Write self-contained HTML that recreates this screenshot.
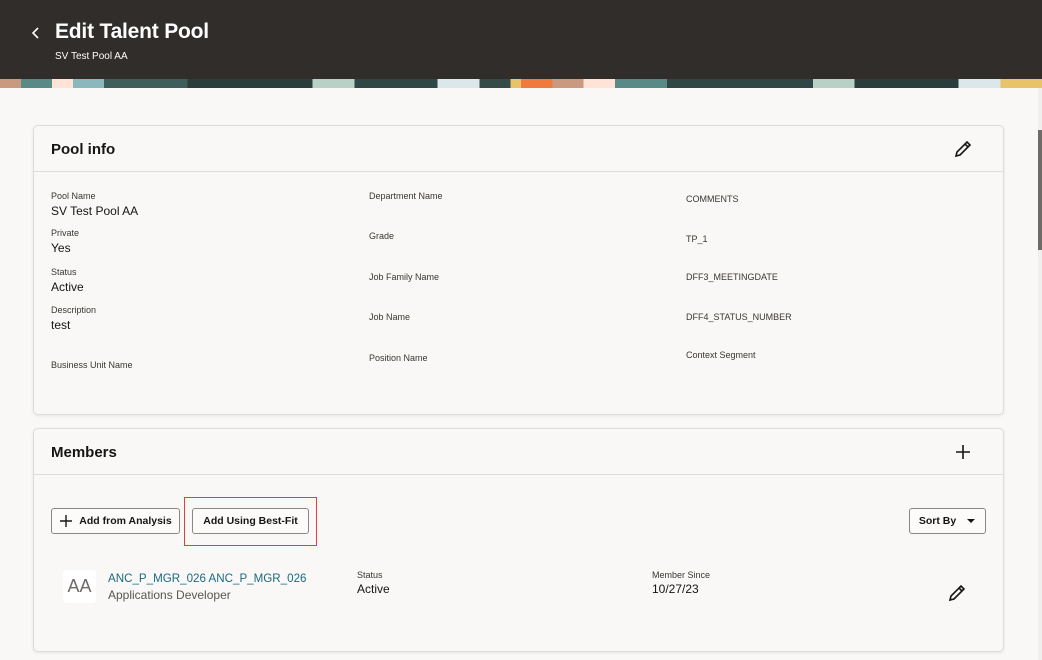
<!DOCTYPE html>
<html><head><style>
*{box-sizing:border-box;margin:0;padding:0}
body{width:1042px;height:660px;overflow:hidden;background:#f9f8f6;font-family:"Liberation Sans",sans-serif;color:#161513;position:relative}
.hdr{position:absolute;left:0;top:0;width:1042px;height:79px;background:#312d2a}
.hdr h1{position:absolute;left:55px;top:20px;color:#fff;font-size:21px;font-weight:bold;letter-spacing:-0.2px}
.hdr .sub{position:absolute;left:55px;top:51px;color:#fff;font-size:10px}
.band{position:absolute;left:0;top:79px;width:1042px;height:9px;background:linear-gradient(90deg,#c99a80 0 2%,#5a8a86 2% 5%,#ffe3d6 5% 7%,#8ab8bc 7% 10%,#3d5e5a 10% 18%,#2a3d3b 18% 30%,#b9d0c6 30% 34%,#2f4644 34% 42%,#dbe7ea 42% 46%,#354b48 46% 49%,#e8c36a 49% 50%,#f07a3e 50% 53%,#c99a80 53% 56%,#ffe3d6 56% 59%,#5a8a86 59% 64%,#2f4644 64% 78%,#b9d0c6 78% 82%,#2a3d3b 82% 92%,#dbe7ea 92% 96%,#e8c36a 96% 100%)}
.sb{position:absolute;left:1038px;top:88px;width:4px;height:572px;background:#f0efed}
.sb i{position:absolute;left:0;top:42px;width:4px;height:120px;background:#6f6b67}
.card{position:absolute;left:33px;width:971px;background:#f9f8f6;border:1px solid #dedcd9;border-radius:5px;box-shadow:0 1px 3px rgba(0,0,0,.08)}
.card h2{position:absolute;left:17px;font-size:15px;font-weight:bold}
.div{position:absolute;left:0;right:0;height:1px;background:#dedcd9}
.lbl{position:absolute;font-size:9px;color:#3a3632}
.val{position:absolute;font-size:12px;color:#161513}
.btn{position:absolute;height:26px;border:1px solid #8b8782;border-radius:3px;background:#fcfbfa;font-size:10.5px;font-weight:bold;display:flex;align-items:center;justify-content:center}
</style></head><body>
<div class="hdr">
<svg style="position:absolute;left:31px;top:27px" width="10" height="12"><path d="M7 1L2 6L7 11" stroke="#fff" stroke-width="1.6" fill="none"/></svg>
<h1>Edit Talent Pool</h1><div class="sub">SV Test Pool AA</div></div>
<div class="band"></div>
<div class="sb"><i></i></div>

<div class="card" style="top:125px;height:290px">
<h2 style="top:15px">Pool info</h2>
<svg style="position:absolute;left:920px;top:14px" width="18" height="18"><path d="M2 16L3 12L13 2L16 5L6 15Z M11 4L14 7" stroke="#161513" stroke-width="1.6" fill="none"/></svg>
<div class="div" style="top:45px"></div>
<div class="lbl" style="left:17px;top:65px">Pool Name</div><div class="val" style="left:17px;top:78px">SV Test Pool AA</div>
<div class="lbl" style="left:17px;top:102px">Private</div><div class="val" style="left:17px;top:115px">Yes</div>
<div class="lbl" style="left:17px;top:141px">Status</div><div class="val" style="left:17px;top:154px">Active</div>
<div class="lbl" style="left:17px;top:179px">Description</div><div class="val" style="left:17px;top:192px">test</div>
<div class="lbl" style="left:17px;top:234px">Business Unit Name</div>
<div class="lbl" style="left:335px;top:65px">Department Name</div>
<div class="lbl" style="left:335px;top:105px">Grade</div>
<div class="lbl" style="left:335px;top:146px">Job Family Name</div>
<div class="lbl" style="left:335px;top:186px">Job Name</div>
<div class="lbl" style="left:335px;top:227px">Position Name</div>
<div class="lbl" style="left:652px;top:68px">COMMENTS</div>
<div class="lbl" style="left:652px;top:108px">TP_1</div>
<div class="lbl" style="left:652px;top:146px">DFF3_MEETINGDATE</div>
<div class="lbl" style="left:652px;top:186px">DFF4_STATUS_NUMBER</div>
<div class="lbl" style="left:652px;top:224px">Context Segment</div>
</div>

<div class="card" style="top:428px;height:224px">
<h2 style="top:15px">Members</h2>
<svg style="position:absolute;left:920px;top:14px" width="18" height="18"><path d="M9 2V16M2 9H16" stroke="#161513" stroke-width="1.6"/></svg>
<div class="div" style="top:45px"></div>
<div class="btn" style="left:17px;top:79px;width:129px"><svg width="14" height="14" style="margin-right:6px"><path d="M7 1V13M1 7H13" stroke="#161513" stroke-width="1.4"/></svg>Add from Analysis</div>
<div style="position:absolute;left:150px;top:68px;width:133px;height:49px;border:1px solid #e0403c"></div>
<div class="btn" style="left:158px;top:79px;width:117px">Add Using Best-Fit</div>
<div class="btn" style="left:875px;top:79px;width:77px">Sort By<svg width="10" height="6" style="margin-left:10px"><path d="M1 1L9 1L5 5Z" fill="#161513"/></svg></div>
<div style="position:absolute;left:29px;top:141px;width:33px;height:33px;background:#fff;border-radius:3px;color:#6f6b67;font-size:18px;display:flex;align-items:center;justify-content:center">AA</div>
<div style="position:absolute;left:74px;top:143px;font-size:11.6px;color:#1b6a80">ANC_P_MGR_026 ANC_P_MGR_026</div>
<div style="position:absolute;left:74px;top:159px;font-size:12px;color:#5a5652">Applications Developer</div>
<div class="lbl" style="left:323px;top:141px">Status</div><div class="val" style="left:323px;top:153px">Active</div>
<div class="lbl" style="left:618px;top:141px">Member Since</div><div class="val" style="left:618px;top:153px">10/27/23</div>
<svg style="position:absolute;left:914px;top:155px" width="18" height="18"><path d="M2 16L3 12L13 2L16 5L6 15Z M11 4L14 7" stroke="#161513" stroke-width="1.6" fill="none"/></svg>
</div>
</body></html>
